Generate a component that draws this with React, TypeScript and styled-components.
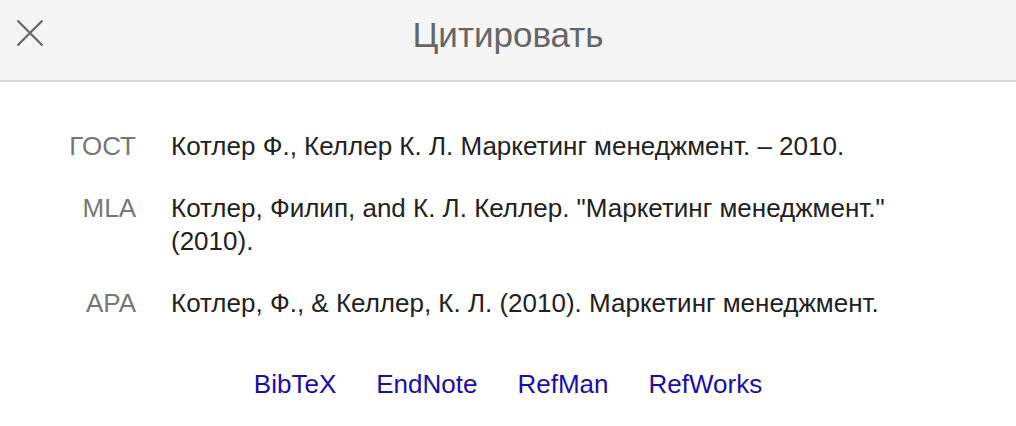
import styled, { createGlobalStyle } from "styled-components";

const GlobalStyle = createGlobalStyle`
  html, body {
    margin: 0;
    padding: 0;
    background: #fff;
    font-family: "Liberation Sans", Arial, sans-serif;
  }
`;

const citations = [
  { label: "ГОСТ", text: "Котлер Ф., Келлер К. Л. Маркетинг менеджмент. – 2010." },
  { label: "MLA", text: 'Котлер, Филип, and К. Л. Келлер. "Маркетинг менеджмент." (2010).' },
  { label: "APA", text: "Котлер, Ф., & Келлер, К. Л. (2010). Маркетинг менеджмент." },
];

const exports = ["BibTeX", "EndNote", "RefMan", "RefWorks"];

export default function App() {
  return (
    <>
      <GlobalStyle />
      <Dialog>
        <Header>
          <CloseButton aria-label="Закрыть">
            <svg width="28" height="28" viewBox="0 0 28 28">
              <path d="M1.5 1.5L26.5 26.5M26.5 1.5L1.5 26.5" stroke="#666" strokeWidth="2.2" fill="none" />
            </svg>
          </CloseButton>
          <Title>Цитировать</Title>
        </Header>
        <Body>
          <Table>
            {citations.map((c) => (
              <Row key={c.label}>
                <Label>{c.label}</Label>
                <Citation>{c.text}</Citation>
              </Row>
            ))}
          </Table>
          <Links>
            {exports.map((e) => (
              <Link key={e} href="#">
                {e}
              </Link>
            ))}
          </Links>
        </Body>
      </Dialog>
    </>
  );
}

const Dialog = styled.div`
  width: 1016px;
  height: 426px;
  display: flex;
  flex-direction: column;
`;

const Header = styled.div`
  position: relative;
  height: 80px;
  background: #f5f5f5;
  border-bottom: 2px solid #dadada;
  display: flex;
  align-items: center;
  justify-content: center;
`;

const CloseButton = styled.button`
  position: absolute;
  left: 16px;
  top: 19px;
  width: 28px;
  height: 28px;
  padding: 0;
  border: 0;
  background: none;
  display: flex;
`;

const Title = styled.h1`
  margin: 0 0 12px;
  font-size: 35px;
  line-height: 39px;
  font-weight: 400;
  color: #666;
`;

const Body = styled.div`
  padding: 48px 0 0 0;
  display: flex;
  flex-direction: column;
`;

const Table = styled.div`
  display: flex;
  flex-direction: column;
  gap: 29px;
`;

const Row = styled.div`
  display: grid;
  grid-template-columns: 136px 740px;
  column-gap: 35px;
  font-size: 26px;
  line-height: 33px;
`;

const Label = styled.div`
  text-align: right;
  color: #777;
`;

const Citation = styled.div`
  color: #222;
`;

const Links = styled.div`
  margin-top: 48px;
  display: flex;
  justify-content: center;
  gap: 40px;
  font-size: 26px;
  line-height: 33px;
`;

const Link = styled.a`
  color: #1a0dab;
  text-decoration: none;
`;
